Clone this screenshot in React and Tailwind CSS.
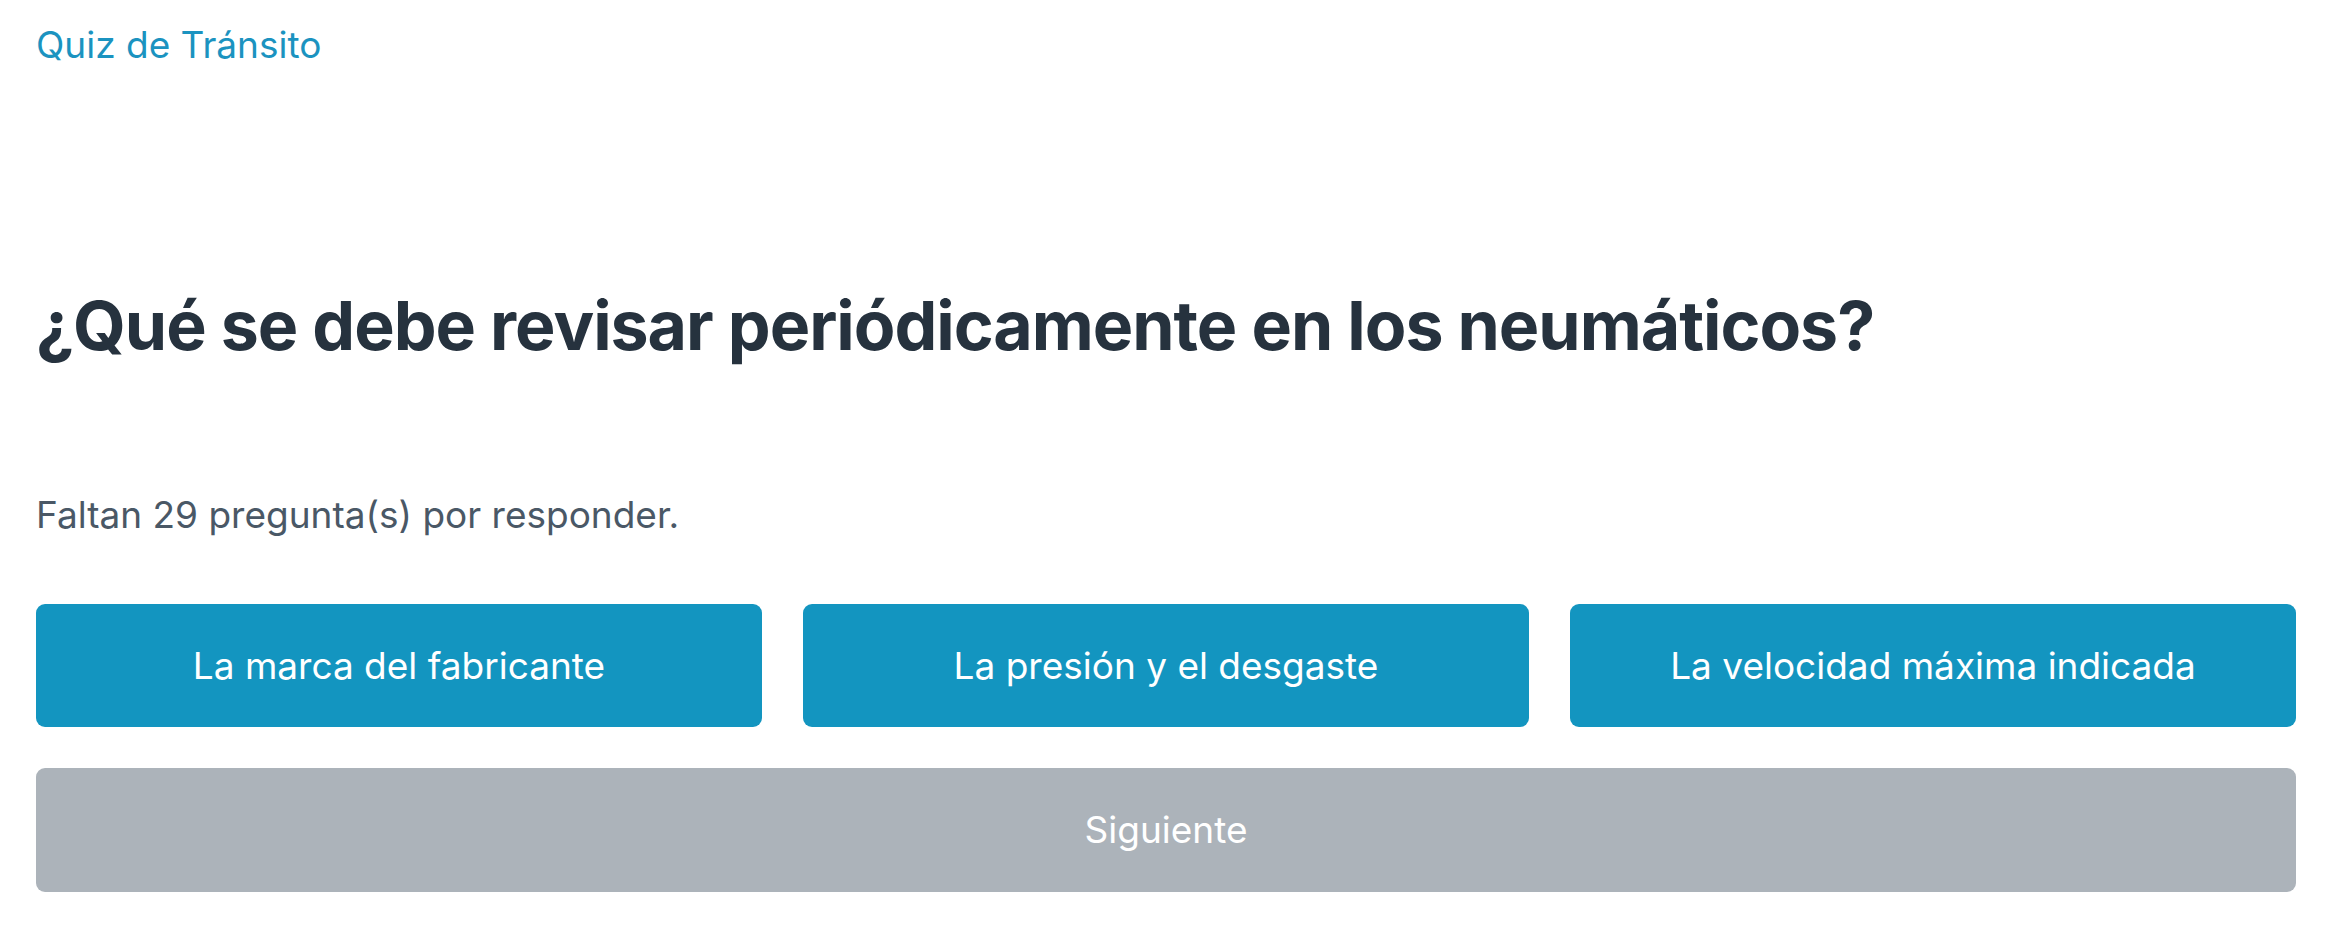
import React from 'react';

const options = [
    'La marca del fabricante',
    'La presión y el desgaste',
    'La velocidad máxima indicada',
];

export default function App() {
    return (
        <div className="min-h-screen bg-white pl-[36px] pr-[51px] pt-[18px] font-['Inter','Noto_Sans',sans-serif]">
            {/* header link */}
            <a href="#" className="block text-[37px] leading-[54px] text-[#1b93c0]">
                Quiz de Tránsito
            </a>

            <h1 className="mt-[212px] text-[68px] font-bold leading-[82px] tracking-[-0.015em] text-[#26323e]">
                ¿Qué se debe revisar periódicamente en los neumáticos?
            </h1>

            <p className="mt-[122px] text-[37px] leading-[54px] text-[#4a5866]">
                Faltan 29 pregunta(s) por responder.
            </p>

            <div className="mt-[62px] grid grid-cols-3 gap-x-[41px] gap-y-[41px]">
                {options.map(opt => (
                    <button
                        key={opt}
                        className="h-[123px] rounded-[9px] bg-[#1395c0] text-[37px] text-white"
                    >
                        {opt}
                    </button>
                ))}
                <button
                    disabled
                    className="col-span-3 h-[124px] rounded-[9px] bg-[#acb3ba] text-[37px] text-white"
                >
                    Siguiente
                </button>
            </div>
        </div>
    );
}
